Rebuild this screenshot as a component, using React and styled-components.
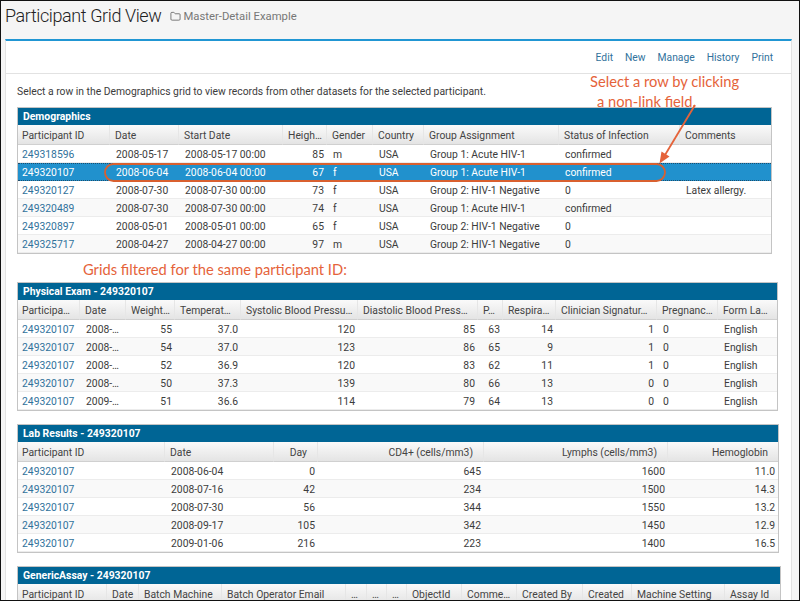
import React from 'react';
import styled, { createGlobalStyle } from 'styled-components';
import { Folder } from 'lucide-react';

const ID = '249320107';

const DEMOGRAPHICS = {
  title: 'Demographics',
  width: 755,
  flush: true,
  selected: 1,
  columns: [
    { label: 'Participant ID', w: 92 },
    { label: 'Date', w: 69 },
    { label: 'Start Date', w: 104 },
    { label: 'Heigh…', w: 44, right: true },
    { label: 'Gender', w: 46 },
    { label: 'Country', w: 51 },
    { label: 'Group Assignment', w: 135 },
    { label: 'Status of Infection', w: 121 },
    { label: 'Comments', w: 91 },
  ],
  rows: [
    ['249318596', '2008-05-17', '2008-05-17 00:00', '85', 'm', 'USA', 'Group 1: Acute HIV-1', 'confirmed', ''],
    ['249320107', '2008-06-04', '2008-06-04 00:00', '67', 'f', 'USA', 'Group 1: Acute HIV-1', 'confirmed', ''],
    ['249320127', '2008-07-30', '2008-07-30 00:00', '73', 'f', 'USA', 'Group 2: HIV-1 Negative', '0', 'Latex allergy.'],
    ['249320489', '2008-07-30', '2008-07-30 00:00', '74', 'f', 'USA', 'Group 1: Acute HIV-1', 'confirmed', ''],
    ['249320897', '2008-05-01', '2008-05-01 00:00', '65', 'f', 'USA', 'Group 2: HIV-1 Negative', '0', ''],
    ['249325717', '2008-04-27', '2008-04-27 00:00', '97', 'm', 'USA', 'Group 2: HIV-1 Negative', '0', ''],
  ],
};

const PHYSICAL_EXAM = {
  title: `Physical Exam - ${ID}`,
  width: 761,
  columns: [
    { label: 'Participa…', w: 62 },
    { label: 'Date', w: 46 },
    { label: 'Weight…', w: 49, right: true },
    { label: 'Temperat…', w: 66, right: true },
    { label: 'Systolic Blood Pressu…', w: 117, right: true },
    { label: 'Diastolic Blood Press…', w: 120, right: true },
    { label: 'P…', w: 25, right: true },
    { label: 'Respira…', w: 53, right: true },
    { label: 'Clinician Signatur…', w: 101, right: true },
    { label: 'Pregnanc…', w: 61 },
    { label: 'Form La…', w: 59 },
  ],
  rows: [
    [ID, '2008-…', '55', '37.0', '120', '85', '63', '14', '1', '0', 'English'],
    [ID, '2008-…', '54', '37.0', '123', '86', '65', '9', '1', '0', 'English'],
    [ID, '2008-…', '52', '36.9', '120', '83', '62', '11', '1', '0', 'English'],
    [ID, '2008-…', '50', '37.3', '139', '80', '66', '13', '0', '0', 'English'],
    [ID, '2009-…', '51', '36.6', '114', '79', '64', '13', '0', '0', 'English'],
  ],
};

const LAB_RESULTS = {
  title: `Lab Results - ${ID}`,
  width: 762,
  columns: [
    { label: 'Participant ID', w: 147 },
    { label: 'Date', w: 109 },
    { label: 'Day', w: 44, right: true, headRight: true },
    { label: 'CD4+ (cells/mm3)', w: 166, right: true, headRight: true },
    { label: 'Lymphs (cells/mm3)', w: 184, right: true, headRight: true },
    { label: 'Hemoglobin', w: 110, right: true, headRight: true },
  ],
  rows: [
    [ID, '2008-06-04', '0', '645', '1600', '11.0'],
    [ID, '2008-07-16', '42', '234', '1500', '14.3'],
    [ID, '2008-07-30', '56', '344', '1550', '13.2'],
    [ID, '2008-09-17', '105', '342', '1450', '12.9'],
    [ID, '2009-01-06', '216', '223', '1400', '16.5'],
  ],
};

const GENERIC_ASSAY = {
  title: `GenericAssay - ${ID}`,
  width: 764,
  columns: [
    { label: 'Participant ID', w: 89 },
    { label: 'Date', w: 32 },
    { label: 'Batch Machine', w: 83 },
    { label: 'Batch Operator Email', w: 124 },
    { label: '…', w: 21 },
    { label: '…', w: 20 },
    { label: '…', w: 20 },
    { label: 'ObjectId', w: 55 },
    { label: 'Comme…', w: 55 },
    { label: 'Created By', w: 66 },
    { label: 'Created', w: 49 },
    { label: 'Machine Setting', w: 93 },
    { label: 'Assay Id', w: 55 },
  ],
  rows: [],
};

const NAV_ITEMS = ['Edit', 'New', 'Manage', 'History', 'Print'];

export default function App() {
  return (
    <Frame>
      <GlobalStyle />
      <TitleRow>
        <PageTitle>Participant Grid View</PageTitle>
        <FolderLink>
          <Folder size={11} strokeWidth={1.5} />
          Master-Detail Example
        </FolderLink>
      </TitleRow>
      <Panel>
        <NavBar>
          {NAV_ITEMS.map((item) => <NavLink key={item}>{item}</NavLink>)}
        </NavBar>
        <Content>
          <Intro>Select a row in the Demographics grid to view records from other datasets for the selected participant.</Intro>
          <DataGrid {...DEMOGRAPHICS} />
          <FilterNote>Grids filtered for the same participant ID:</FilterNote>
          <DataGrid {...PHYSICAL_EXAM} />
          <DataGrid {...LAB_RESULTS} />
          <DataGrid {...GENERIC_ASSAY} />
        </Content>
      </Panel>
      <Callout>
        <CalloutLine>Select a row by clicking</CalloutLine>
        <CalloutLine $indent={7}>a non-link field.</CalloutLine>
      </Callout>
      <Markup width="800" height="601" viewBox="0 0 800 601">
        <rect x="105" y="164" width="560" height="17" rx="8.5" fill="none" stroke="#d9602f" strokeWidth="1.8" />
        <path d="M695 105 L665 155" stroke="#e5633a" strokeWidth="1.8" fill="none" />
        <path d="M659.5 163.5 L661.5 151.5 L669.5 156.5 Z" fill="#e5633a" />
      </Markup>
    </Frame>
  );
}

const DataGrid = ({ title, width, flush, columns, rows, selected }) => (
  <GridBox $width={width} $flush={flush}>
    <GridTitle>{title}</GridTitle>
    <GridTable>
      <colgroup>
        {columns.map((col, index) => <GridCol key={index} $w={col.w} />)}
      </colgroup>
      <thead>
        <tr>
          {columns.map((col, index) => (
            <HeadCell key={index} $right={col.headRight}>{col.label}</HeadCell>
          ))}
        </tr>
      </thead>
      <tbody>
        {rows.map((row, rowIndex) => (
          <BodyRow key={rowIndex} $selected={rowIndex === selected}>
            {row.map((value, index) => (
              <BodyCell key={index} $right={columns[index].right}>
                {index === 0 ? <IdLink>{value}</IdLink> : value}
              </BodyCell>
            ))}
          </BodyRow>
        ))}
      </tbody>
    </GridTable>
  </GridBox>
);

const GlobalStyle = createGlobalStyle`
  html, body {
    margin: 0;
    padding: 0;
    background: #f5f5f5;
  }
  * {
    box-sizing: border-box;
  }
`;

const Frame = styled.div`
  position: relative;
  width: 800px;
  height: 601px;
  overflow: hidden;
  display: flex;
  flex-direction: column;
  border: 1px solid #111;
  background: #f5f5f5;
  font-family: Roboto, "Liberation Sans", sans-serif;
  font-size: 10.35px;
  color: #3c3c3c;
`;

const TitleRow = styled.div`
  height: 38px;
  flex-shrink: 0;
  display: flex;
  align-items: center;
  gap: 9px;
  padding: 0 0 10px 4px;
`;

const PageTitle = styled.div`
  font-size: 18px;
  font-weight: 300;
  letter-spacing: -0.4px;
  color: #222;
`;

const FolderLink = styled.div`
  display: flex;
  align-items: center;
  gap: 2px;
  margin-top: 3px;
  font-size: 11.3px;
  color: #777;

  svg {
    color: #444;
  }
`;

const Panel = styled.div`
  flex-grow: 1;
  margin: 0 7px 0 4px;
  background: #fff;
  border: 1px solid #e2e2e2;
  border-top: 2px solid #2196d3;
`;

const NavBar = styled.div`
  height: 33px;
  display: flex;
  justify-content: flex-end;
  align-items: center;
  gap: 12px;
  padding-right: 18px;
  border-bottom: 1px solid #e2e2e2;
`;

const NavLink = styled.a`
  font-size: 10.3px;
  color: #31729c;
`;

const Content = styled.div`
  padding: 11px 0 0 11px;
`;

const Intro = styled.div`
  height: 22px;
  line-height: 14px;
`;

const FilterNote = styled.div`
  height: 28px;
  padding: 6px 0 0 66px;
  font-family: Lato, "Liberation Sans", sans-serif;
  font-size: 14.7px;
  line-height: 18px;
  color: #e5633a;
`;

const GridBox = styled.div`
  width: ${(props) => props.$width}px;
  border: 1px solid #c4c4c4;
  margin-bottom: ${(props) => (props.$flush ? 0 : 13)}px;
`;

const GridTitle = styled.div`
  height: 17px;
  line-height: 17px;
  padding-left: 5px;
  font-size: 10.4px;
  font-weight: 700;
  color: #fff;
  background: #006595;
`;

const GridTable = styled.table`
  width: 100%;
  table-layout: fixed;
  border-collapse: separate;
  border-spacing: 0;
`;

const GridCol = styled.col`
  width: ${(props) => props.$w}px;
`;

const HeadCell = styled.th`
  height: 20px;
  padding: 1px ${(props) => (props.$right ? '10px' : '0')} 0 5px;
  font-weight: 400;
  font-size: 10.35px;
  white-space: nowrap;
  overflow: hidden;
  text-align: ${(props) => (props.$right ? 'right' : 'left')};
  color: #444;
  background: linear-gradient(#fafafa, #e4e4e4);
  border-right: 1px solid #e6e6e6;
  border-bottom: 1px solid #d0d0d0;

  &:first-child {
    padding-left: 4px;
  }

  &:last-child {
    border-right: 0;
  }
`;

const BodyRow = styled.tr`
  background: ${(props) => (props.$selected ? '#2191cd' : '#fff')};
  color: ${(props) => (props.$selected ? '#fff' : '#3c3c3c')};

  &:nth-child(even) {
    background: ${(props) => (props.$selected ? '#2191cd' : '#f9f9f9')};
  }

  td {
    padding-top: ${(props) => (props.$selected ? 1 : 2)}px;
    border-bottom: 1px ${(props) => (props.$selected ? 'dotted #1d4e6e' : 'solid #ececec')};
    border-top: ${(props) => (props.$selected ? '1px dotted #1d4e6e' : '0')};
  }

  a {
    color: ${(props) => (props.$selected ? '#fff' : '#31729c')};
  }
`;

const BodyCell = styled.td`
  height: 18px;
  padding-right: ${(props) => (props.$right ? 3 : 0)}px;
  padding-bottom: 0;
  padding-left: 6px;
  white-space: nowrap;
  overflow: hidden;
  text-align: ${(props) => (props.$right ? 'right' : 'left')};

  &:first-child {
    padding-left: 4px;
  }
`;

const IdLink = styled.a``;

const Callout = styled.div`
  position: absolute;
  top: 70px;
  left: 589px;
  font-family: Lato, "Liberation Sans", sans-serif;
  font-size: 14.7px;
  line-height: 20px;
  color: #e5633a;
`;

const CalloutLine = styled.div`
  padding-left: ${(props) => props.$indent || 0}px;
`;

const Markup = styled.svg`
  position: absolute;
  top: -1px;
  left: -1px;
  pointer-events: none;
`;
